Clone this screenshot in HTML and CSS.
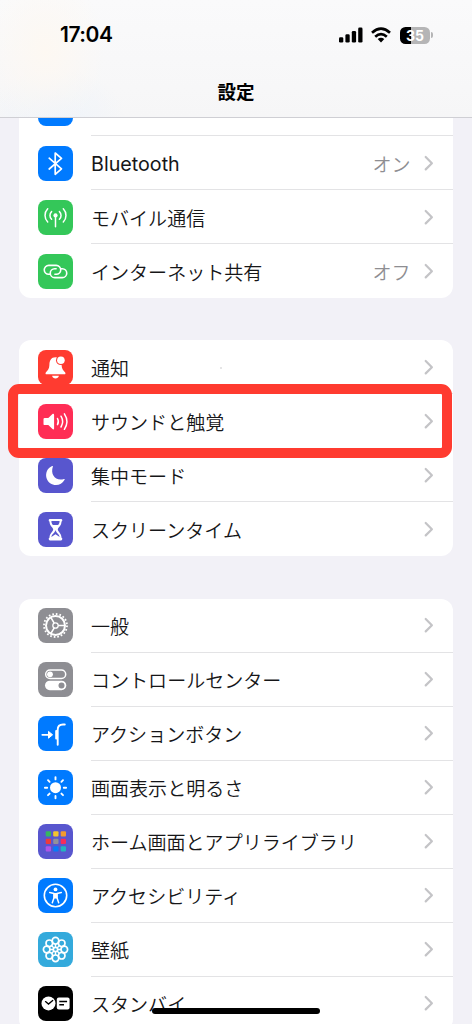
FILE: index.html
```html
<!DOCTYPE html>
<html lang="ja">
<head>
<meta charset="utf-8">
<title>設定</title>
<link rel="stylesheet" href="styles.css">
</head>
<body>
<svg class="defs" width="0" height="0">
  <symbol id="chevron" viewBox="0 0 10 16"><path d="M1.700 2 7.900 8.200 1.700 14.400" fill="none" stroke="#c4c4c7" stroke-width="2.200" stroke-linecap="round" stroke-linejoin="round"/></symbol>
</svg>
<div class="phone">
  <header class="header">
    <div class="status">
      <span class="time">17:04</span>
      <div class="indicators">
        <svg width="24" height="16" viewBox="0 0 24 16"><rect x="0" y="10.2" width="4.3" height="5.3" rx="1.3"/><rect x="6.4" y="7.3" width="4.3" height="8.2" rx="1.3"/><rect x="12.8" y="4" width="4.3" height="11.5" rx="1.3"/><rect x="19.2" y=".6" width="4.3" height="14.9" rx="1.3"/></svg>
        <svg class="wifi" width="20" height="16" viewBox="0 0 20 16"><g fill="none" stroke="#000" stroke-width="2.7"><path d="M1 5.700Q10-2.400 19 5.700"/><path d="M4.200 9.700Q10 4.500 15.800 9.700"/></g><path d="M6.700 12.100Q10 9.300 13.300 12.100L10 15.600Z"/></svg>
        <div class="battery"><span class="battery-body">35</span><span class="battery-tip"></span></div>
      </div>
    </div>
    <h1 class="title">設定</h1>
  </header>

  <main class="list">
    <section class="group group-first">
      <div class="row row-cut"><div class="icon blue"></div><div class="cell"></div></div>
      <div class="row">
        <svg class="icon blue" viewBox="0 0 35 35"><path d="m11.200 12.200 12.300 10.600-6.300 5.500V7l6.300 5.400L11.200 23" fill="none" stroke="#fff" stroke-width="1.700" stroke-linejoin="round" stroke-linecap="round"/></svg>
        <div class="cell"><span class="label latin">Bluetooth</span><span class="value">オン</span><svg class="chev"><use href="#chevron"/></svg></div>
      </div>
      <div class="row">
        <svg class="icon green" viewBox="0 0 35 35"><g fill="none" stroke="#fff" stroke-width="1.500" stroke-linecap="round"><path d="M17.500 16v10.800"/><path d="M13.600 11.600a5.200 5.200 0 0 0 0 7.600M21.400 11.600a5.200 5.200 0 0 1 0 7.600M9.700 8.800a9.500 9.500 0 0 0 0 13.200M25.300 8.800a9.500 9.500 0 0 1 0 13.200"/></g><circle cx="17.500" cy="15.400" r="2.100" fill="#fff"/></svg>
        <div class="cell"><span class="label">モバイル通信</span><svg class="chev"><use href="#chevron"/></svg></div>
      </div>
      <div class="row">
        <svg class="icon green" viewBox="0 0 35 35"><g fill="none" stroke="#fff" stroke-width="1.600" stroke-linecap="round"><path d="M12 20.300h-1.300a4.450 4.450 0 0 1 0-8.900h7.600a4.450 4.450 0 0 1 0 8.900h-1.400"/><path d="M23 14.700h1.300a4.450 4.450 0 0 1 0 8.900h-7.600a4.450 4.450 0 0 1 0-8.900h1.400"/></g></svg>
        <div class="cell"><span class="label">インターネット共有</span><span class="value">オフ</span><svg class="chev"><use href="#chevron"/></svg></div>
      </div>
    </section>

    <section class="group">
      <div class="row speck">
        <svg class="icon red" viewBox="0 0 35 35"><path d="M17.500 7.200c-4.400 0-6 3.400-6.100 7.200-.1 4.600-1.800 5.800-3.600 8.100-.6.900-.2 1.800.7 1.800h18c.9 0 1.300-.9.700-1.800-1.800-2.300-3.500-3.500-3.600-8.100-.1-3.800-1.700-7.200-6.100-7.200ZM14.100 25.800h6.800c-.6 3.600-6.200 3.600-6.800 0Z" fill="#fff"/><circle cx="22.900" cy="10.200" r="4.900" fill="#ff3b30"/><circle cx="22.900" cy="10.200" r="3.800" fill="#fff"/></svg>
        <div class="cell"><span class="label">通知</span><svg class="chev"><use href="#chevron"/></svg></div>
      </div>
      <div class="row highlighted">
        <svg class="icon pink" viewBox="0 0 35 35"><path d="M6.700 14.100h3.600l4.200-4c.7-.7 1.600-.3 1.600.6v13.800c0 1-.9 1.300-1.600.6l-4.200-4H6.700q-1.200 0-1.200-1.200v-4.600q0-1.200 1.200-1.200Z" fill="#fff"/><path d="M19.500 14.500q1.700 3.100 0 6.200M23 12.200q3.200 5.400 0 10.800M26.400 9.900q5 7.700 0 15.400" fill="none" stroke="#fff" stroke-width="1.500" stroke-linecap="round"/></svg>
        <div class="cell"><span class="label">サウンドと触覚</span><svg class="chev"><use href="#chevron"/></svg></div>
      </div>
      <div class="row">
        <svg class="icon indigo" viewBox="0 0 35 35"><path d="M14.900 8.600C12.100 16.600 17.500 23.600 26 21.100q1-.3.600.6c-4 8-15.800 6.600-18.100-1.700-1.300-5 1-9.800 5.600-11.900q1-.5.800.5Z" fill="#fff"/></svg>
        <div class="cell"><span class="label">集中モード</span><svg class="chev"><use href="#chevron"/></svg></div>
      </div>
      <div class="row">
        <svg class="icon indigo" viewBox="0 0 35 35"><path d="M12 6.900h11q1.300 0 1.300 1.300T23.500 9.600c0 4.600-3.700 5.900-3.700 8s3.700 3.600 3.700 8.200q.8 0 .8 1.300T23 28.400H12q-1.300 0-1.300-1.300t.8-1.300c0-4.600 3.700-6.100 3.700-8.200s-3.700-3.400-3.700-8q-.8 0-.8-1.400T12 6.900Z" fill="#fff"/><path d="M13.400 9.100h8.200c0 1.900-.6 2.900-1.400 3.800h-5.400c-.8-.9-1.400-1.900-1.400-3.800ZM17.500 17.800c.4 3.300 3.900 4.100 4.100 7.200l-4.100-2.700-4.100 2.700c.2-3.100 3.700-3.900 4.100-7.200Z" fill="#5856ce"/></svg>
        <div class="cell"><span class="label">スクリーンタイム</span><svg class="chev"><use href="#chevron"/></svg></div>
      </div>
    </section>

    <section class="group">
      <div class="row">
        <svg class="icon gray" viewBox="0 0 35 35"><g fill="none" stroke="#fff"><circle cx="17.500" cy="17.500" r="11.500" stroke-width="1.800" stroke-dasharray="1.700 1.911"/><circle cx="17.500" cy="17.500" r="9.500" stroke-width="2"/><circle cx="17.500" cy="17.500" r="2.700" stroke-width="1.300"/><path d="M20.200 17.500h7M16.200 15.200l-3.700-6.300M16.200 19.800l-3.700 6.300" stroke-width="1.600"/></g></svg>
        <div class="cell"><span class="label">一般</span><svg class="chev"><use href="#chevron"/></svg></div>
      </div>
      <div class="row">
        <svg class="icon gray" viewBox="0 0 35 35"><rect x="7.700" y="8" width="20" height="8.600" rx="4.300" fill="none" stroke="#fff" stroke-width="1.500"/><circle cx="12" cy="12.300" r="2.900" fill="#fff"/><rect x="7" y="18.700" width="21.300" height="9.500" rx="4.750" fill="#fff"/><circle cx="23.500" cy="23.450" r="3" fill="#8e8e93"/></svg>
        <div class="cell"><span class="label">コントロールセンター</span><svg class="chev"><use href="#chevron"/></svg></div>
      </div>
      <div class="row">
        <svg class="icon blue" viewBox="0 0 35 35"><path d="M4.300 18.800h8" stroke="#fff" stroke-width="1.800" stroke-linecap="round"/><path d="M10.500 15.400 14.600 18.800l-4.100 3.400Z" fill="#fff" stroke="#fff" stroke-linejoin="round"/><path d="M26.800 8.500H25q-5.300 0-5.300 5.300v15" fill="none" stroke="#fff" stroke-width="1.900" stroke-linecap="round"/><rect x="17.200" y="14" width="2.300" height="9.600" rx="1" fill="#fff"/></svg>
        <div class="cell"><span class="label">アクションボタン</span><svg class="chev"><use href="#chevron"/></svg></div>
      </div>
      <div class="row">
        <svg class="icon blue" viewBox="0 0 35 35"><circle cx="17.500" cy="17.700" r="5.500" fill="#fff"/><path d="M17.500 7.100v2.300M17.500 26v2.300M6.900 17.700h2.300M25.800 17.700h2.300M10 10.200l1.600 1.600M23.400 23.600l1.600 1.600M25 10.200l-1.600 1.600M11.600 23.600 10 25.200" stroke="#fff" stroke-width="1.900" stroke-linecap="round"/></svg>
        <div class="cell"><span class="label">画面表示と明るさ</span><svg class="chev"><use href="#chevron"/></svg></div>
      </div>
      <div class="row">
        <svg class="icon indigo" viewBox="0 0 35 35"><rect x="7.700" y="7.300" width="5.300" height="5.300" rx="1" fill="#35b760"/><rect x="15.200" y="7.300" width="5.300" height="5.300" rx="1" fill="#f5c52e"/><rect x="22.700" y="7.300" width="5.300" height="5.300" rx="1" fill="#f29a2e"/><rect x="7.700" y="14.800" width="5.300" height="5.300" rx="1" fill="#ed3b3b"/><rect x="15.200" y="14.800" width="5.300" height="5.300" rx="1" fill="#929099"/><rect x="22.700" y="14.800" width="5.300" height="5.300" rx="1" fill="#f52c5b"/><rect x="7.700" y="22.300" width="5.300" height="5.300" rx="1" fill="#ad55e8"/><rect x="15.200" y="22.300" width="5.300" height="5.300" rx="1" fill="#087bf7"/><rect x="22.700" y="22.300" width="5.300" height="5.300" rx="1" fill="#21b5bf"/></svg>
        <div class="cell"><span class="label">ホーム画面とアプリライブラリ</span><svg class="chev"><use href="#chevron"/></svg></div>
      </div>
      <div class="row">
        <svg class="icon blue" viewBox="0 0 35 35"><circle cx="17.500" cy="17.500" r="11.200" fill="none" stroke="#fff" stroke-width="1.600"/><circle cx="17.500" cy="11.400" r="1.900" fill="#fff"/><path d="m11.700 14.600 4.300 1v4.200l-1.700 4.900M23.300 14.600l-4.300 1v4.200l1.700 4.900" fill="none" stroke="#fff" stroke-width="1.500" stroke-linecap="round" stroke-linejoin="round"/><path d="M15.400 14.900h4.200v5.600h-4.200Z" fill="#fff"/></svg>
        <div class="cell"><span class="label">アクセシビリティ</span><svg class="chev"><use href="#chevron"/></svg></div>
      </div>
      <div class="row">
        <svg class="icon cyan" viewBox="0 0 35 35"><g fill="none" stroke="#fff" stroke-width="1.700"><circle cx="17.500" cy="8.700" r="3.300"/><circle cx="23.700" cy="11.300" r="3.300"/><circle cx="26.300" cy="17.500" r="3.300"/><circle cx="23.700" cy="23.700" r="3.300"/><circle cx="17.500" cy="26.300" r="3.300"/><circle cx="11.300" cy="23.700" r="3.300"/><circle cx="8.700" cy="17.500" r="3.300"/><circle cx="11.300" cy="11.300" r="3.300"/><circle cx="17.500" cy="17.500" r="2.200"/><path stroke-width="1.400" d="M17.500 12v3.300M17.500 19.700V23M12 17.500h3.300M19.700 17.500H23M13.600 13.600l2.300 2.300M19.100 19.100l2.300 2.300M21.400 13.600l-2.300 2.300M15.900 19.100l-2.300 2.300"/></g></svg>
        <div class="cell"><span class="label">壁紙</span><svg class="chev"><use href="#chevron"/></svg></div>
      </div>
      <div class="row">
        <svg class="icon black" viewBox="0 0 35 35"><circle cx="10.500" cy="17.400" r="7" fill="#fff"/><path d="m7.500 15.600 3 2.500 4.200-3.600" fill="none" stroke="#000" stroke-width="1.300" stroke-linecap="round"/><rect x="18.800" y="11.600" width="12.800" height="12" rx="2" fill="#fff"/><path d="M21.300 15.500h7.800M21.300 18.800h4.700" stroke="#000" stroke-width="1.400"/></svg>
        <div class="cell"><span class="label">スタンバイ</span><svg class="chev"><use href="#chevron"/></svg></div>
      </div>
    </section>
  </main>
  <div class="home-indicator"></div>
</div>
</body>
</html>
```
FILE: styles.css
```css
*, *::after { box-sizing: border-box; }
body { margin: 0; }
.defs { position: absolute; }

.phone {
  position: relative;
  width: 472px;
  height: 1024px;
  overflow: hidden;
  background: #f2f1f7;
  color: #161618;
  font-family: "Noto Sans CJK JP", sans-serif;
}

.header {
  height: 118px;
  border-bottom: 1px solid #cfcfd4;
  background:
    radial-gradient(ellipse 60px 80px at 45px 50px, #fdf8f2, transparent),
    radial-gradient(ellipse 70px 45px at 55px 114px, #eff4fa, transparent),
    linear-gradient(#fafafb, #f6f6f7);
}
.status {
  display: flex;
  justify-content: space-between;
  align-items: center;
  height: 70px;
  padding: 0 39px 0 60px;
}
.time {
  font: 600 21px/26px Inter, sans-serif;
  letter-spacing: -0.450px;
  color: #000;
}
.indicators { display: flex; align-items: center; }
.wifi { margin-left: 8px; }
.battery { display: flex; align-items: center; margin-left: 9px; }
.battery-body {
  width: 30px;
  height: 17px;
  border-radius: 5.500px;
  background: linear-gradient(90deg, #000 11px, #b5b5b6 11px);
  color: #fff;
  font: 700 14px/17px Inter, sans-serif;
  text-align: center;
}
.battery-tip {
  width: 2px;
  height: 6px;
  margin-left: 1px;
  border-radius: 0 3px 3px 0;
  background: #b5b5b6;
}
.title {
  margin: 7px 0 0;
  text-align: center;
  font-size: 18.500px;
  line-height: 28px;
  font-weight: 700;
  color: #000;
}

.list {
  display: flex;
  flex-direction: column;
  gap: 42.300px;
  padding: 0 19px;
}
.group {
  width: 434px;
  border-radius: 12px;
  background: #fff;
}
.group-first { border-radius: 0 0 12px 12px; }
.row {
  position: relative;
  display: flex;
  align-items: center;
  height: 54px;
  padding-left: 19px;
}
.row-cut { height: 18px; align-items: flex-end; overflow: hidden; }
.row-cut .icon { margin-bottom: 10px; }
.icon {
  flex: none;
  width: 35px;
  height: 35px;
  border-radius: 8px;
}
.cell {
  display: flex;
  flex: 1;
  align-items: center;
  align-self: stretch;
  margin-left: 18px;
  padding-right: 19px;
  border-bottom: 1px solid #e3e3e5;
}
.row:last-child .cell { border-bottom-color: transparent; }
.label {
  flex: 1;
  padding-top: 2px;
  font-size: 19.050px;
  font-weight: 350;
  line-height: 28px;
  white-space: nowrap;
}
.latin { font-family: Inter, sans-serif; font-size: 19.700px; font-weight: 400; }
.value {
  padding-top: 2px;
  margin-right: 13.500px;
  font-size: 19px;
  font-weight: 350;
  line-height: 28px;
  color: #8e8e92;
}
.chev { width: 10px; height: 16px; }

.highlighted .cell { border-bottom-color: transparent; }
.highlighted::after {
  content: "";
  position: absolute;
  z-index: 1;
  left: -11.500px;
  top: -10px;
  width: 444.500px;
  height: 73.500px;
  border: 10px solid #ff3b30;
  border-radius: 11px;
}
.speck::after {
  content: "";
  position: absolute;
  left: 201px;
  top: 27px;
  width: 2px;
  height: 2px;
  border-radius: 1px;
  background: #dcdcde;
}

.blue { background: #007aff; }
.green { background: #34c759; }
.red { background: #ff3b30; }
.pink { background: #ff2d55; }
.indigo { background: #5856ce; }
.gray { background: #8e8e93; }
.cyan { background: #34aadc; }
.black { background: #000; }

.home-indicator {
  position: absolute;
  left: 152px;
  top: 1008px;
  width: 168px;
  height: 6px;
  border-radius: 3px;
  background: #000;
}
```
